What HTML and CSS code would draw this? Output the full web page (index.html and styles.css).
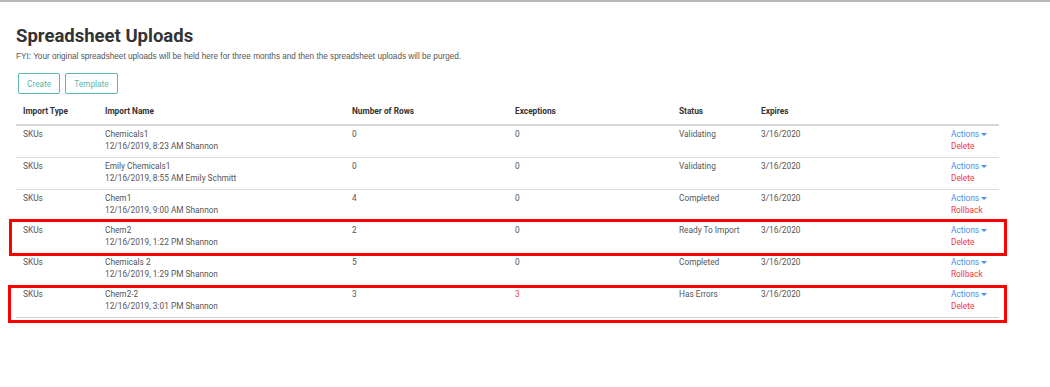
FILE: index.html
```html
<!DOCTYPE html>
<html lang="en">
<head>
    <meta charset="UTF-8">
    <meta name="viewport" content="width=device-width, initial-scale=1.0">
    <title>Spreadsheet Uploads</title>
    <link rel="stylesheet" href="styles.css">
</head>
<body>
    <div class="page">
        <h1>Spreadsheet Uploads</h1>
        <p class="note">FYI: Your original spreadsheet uploads will be held here for three months and then the spreadsheet uploads will be purged.</p>

        <div class="toolbar">
            <button class="btn">Create</button>
            <button class="btn">Template</button>
        </div>

        <table class="uploads">
            <colgroup>
                <col style="width: 82px">
                <col style="width: 247px">
                <col style="width: 163px">
                <col style="width: 164px">
                <col style="width: 82px">
                <col style="width: 190px">
                <col>
            </colgroup>
            <thead>
                <tr>
                    <th>Import Type</th>
                    <th>Import Name</th>
                    <th>Number of Rows</th>
                    <th>Exceptions</th>
                    <th>Status</th>
                    <th>Expires</th>
                    <th></th>
                </tr>
            </thead>
            <tbody>
                <tr>
                    <td>SKUs</td>
                    <td>Chemicals1<br>12/16/2019, 8:23 AM Shannon</td>
                    <td>0</td>
                    <td>0</td>
                    <td>Validating</td>
                    <td>3/16/2020</td>
                    <td><a class="actions">Actions <span class="caret"></span></a><br><a class="danger">Delete</a></td>
                </tr>
                <tr>
                    <td>SKUs</td>
                    <td>Emily Chemicals1<br>12/16/2019, 8:55 AM Emily Schmitt</td>
                    <td>0</td>
                    <td>0</td>
                    <td>Validating</td>
                    <td>3/16/2020</td>
                    <td><a class="actions">Actions <span class="caret"></span></a><br><a class="danger">Delete</a></td>
                </tr>
                <tr>
                    <td>SKUs</td>
                    <td>Chem1<br>12/16/2019, 9:00 AM Shannon</td>
                    <td class="warn">4</td>
                    <td>0</td>
                    <td>Completed</td>
                    <td>3/16/2020</td>
                    <td><a class="actions">Actions <span class="caret"></span></a><br><a class="danger">Rollback</a></td>
                </tr>
                <tr>
                    <td>SKUs</td>
                    <td>Chem2<br>12/16/2019, 1:22 PM Shannon</td>
                    <td>2</td>
                    <td>0</td>
                    <td>Ready To Import</td>
                    <td>3/16/2020</td>
                    <td><a class="actions">Actions <span class="caret"></span></a><br><a class="danger">Delete</a></td>
                </tr>
                <tr>
                    <td>SKUs</td>
                    <td>Chemicals 2<br>12/16/2019, 1:29 PM Shannon</td>
                    <td>5</td>
                    <td>0</td>
                    <td>Completed</td>
                    <td>3/16/2020</td>
                    <td><a class="actions">Actions <span class="caret"></span></a><br><a class="danger">Rollback</a></td>
                </tr>
                <tr>
                    <td>SKUs</td>
                    <td>Chem2-2<br>12/16/2019, 3:01 PM Shannon</td>
                    <td>3</td>
                    <td class="error">3</td>
                    <td>Has Errors</td>
                    <td>3/16/2020</td>
                    <td><a class="actions">Actions <span class="caret"></span></a><br><a class="danger">Delete</a></td>
                </tr>
            </tbody>
        </table>
    </div>

    <!-- review markers drawn over the screenshot -->
    <div class="marker marker-1"></div>
    <div class="marker marker-2"></div>
</body>
</html>
```

FILE: styles.css
```css
body {
    margin: 0;
    border-top: 2px solid #b5b8b8;
    background: white;
    font-family: Roboto, "Liberation Sans", Arial, sans-serif;
    color: #555;
    position: relative;
    min-height: 385px;
}
.page {
    padding: 0 0 0 16px;
}
h1 {
    margin: 0;
    padding-top: 22px;
    font-size: 18.5px;
    line-height: 24px;
    font-weight: 700;
    color: #333;
}
.note {
    margin: 4px 0 0;
    font-family: "Liberation Sans", Arial, sans-serif;
    font-size: 8.2px;
    line-height: 10px;
    color: #555;
}
.toolbar {
    display: flex;
    gap: 5px;
    margin: 11px 0 0 2px;
}
.btn {
    background: white;
    border: 1px solid #5ab8ae;
    border-radius: 2px;
    color: #5ab8ae;
    font-family: Roboto, sans-serif;
    font-size: 8.3px;
    height: 21px;
    padding: 0 8px;
    cursor: pointer;
}
.uploads {
    width: 983px;
    border-collapse: collapse;
    table-layout: fixed;
    margin-top: 3px;
    font-size: 8.3px;
}
.uploads th {
    text-align: left;
    font-weight: 700;
    color: #333;
    padding: 8px 7px 7px;
    line-height: 12px;
    border-bottom: 2px solid #d6d6d6;
}
.uploads td {
    vertical-align: top;
    padding: 2px 7px 5px;
    line-height: 12px;
    border-bottom: 1px solid #dcdcdc;
}
.uploads tbody tr:last-child td {
    border-bottom: 1px solid #d0d0d0;
}
.warn {
    color: #7d5050;
}
.error {
    color: #f04848;
}
.actions {
    color: #4a8fe6;
    cursor: pointer;
}
.caret {
    display: inline-block;
    width: 0;
    height: 0;
    border-left: 3px solid transparent;
    border-right: 3px solid transparent;
    border-top: 3px solid #4a8fe6;
    vertical-align: 1px;
}
.danger {
    color: #f2373f;
    cursor: pointer;
}
.marker {
    position: absolute;
    border: 3px solid #f00;
    box-sizing: border-box;
    pointer-events: none;
}
.marker-1 {
    left: 9px;
    top: 217px;
    width: 998px;
    height: 37px;
}
.marker-2 {
    left: 8px;
    top: 283px;
    width: 999px;
    height: 38px;
}
```
